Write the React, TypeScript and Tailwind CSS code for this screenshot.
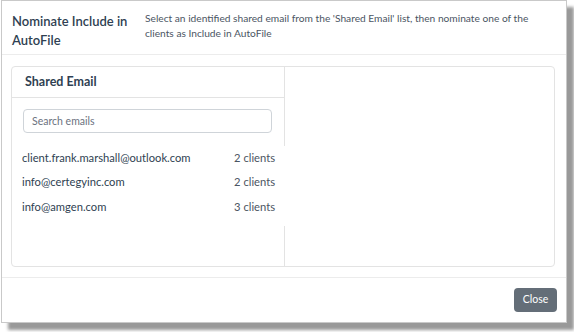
import React from "react";

const emails = [
  { email: "client.frank.marshall@outlook.com", count: "2 clients" },
  { email: "info@certegyinc.com", count: "2 clients" },
  { email: "info@amgen.com", count: "3 clients" },
];

const App = () => {
  return (
    <div className="w-[574px] h-[332px] bg-white font-['Lato',sans-serif]">
      <div className="ml-px w-[566px] h-[323px] bg-white border border-[#c9c9c9] shadow-[7px_7px_3px_rgba(0,0,0,0.4)] flex flex-col">
        {/* header */}
        <div className="h-[54px] border-b border-[#ececec] flex">
          <div className="w-[143px] pl-[10px] pt-[11px] text-[13px] leading-[19px] font-semibold text-[#2f3f52]">
            Nominate Include in AutoFile
          </div>
          <div className="pt-[10px] text-[10.2px] leading-[15px] text-[#4b5563]">
            Select an identified shared email from the 'Shared Email' list, then nominate one of the
            <br />
            clients as Include in AutoFile
          </div>
        </div>

        {/* body */}
        <div className="flex-1 pl-[9px] pr-[11px] pt-[11px] pb-[10px]">
          <div className="h-[201px] border border-[#e3e3e3] rounded flex">
            <div className="w-[273px] border-r border-[#e3e3e3] flex flex-col">
              <div className="h-[31px] border-b border-[#e3e3e3] pl-[13px] flex items-center text-[12.5px] font-bold text-[#2f3f52]">
                Shared Email
              </div>
              <div className="pl-[11px] pr-[12px] pt-[9px]">
                <input
                  placeholder="Search emails"
                  className="w-full h-[24px] border border-[#cfd4d9] rounded px-[8px] text-[10.5px] text-[#333] placeholder:text-[#6b7280] outline-none"
                />
              </div>
              <div className="relative -mr-px bg-white mt-[13px] pl-[10px] pr-[10px] pb-[6px]">
                {emails.map((e) => (
                  <div
                    key={e.email}
                    className="h-[24.5px] flex items-center justify-between text-[11.2px] text-[#2f3f52]"
                  >
                    <span>{e.email}</span>
                    <span className="text-[#4b5563]">{e.count}</span>
                  </div>
                ))}
              </div>
            </div>
            <div className="flex-1" />
          </div>
        </div>

        {/* footer */}
        <div className="h-[45px] border-t border-[#ececec] flex items-center justify-end pr-[9px]">
          <button className="w-[43px] h-[24px] rounded bg-[#646e78] text-white text-[10.5px]">
            Close
          </button>
        </div>
      </div>
    </div>
  );
};

export default App;
